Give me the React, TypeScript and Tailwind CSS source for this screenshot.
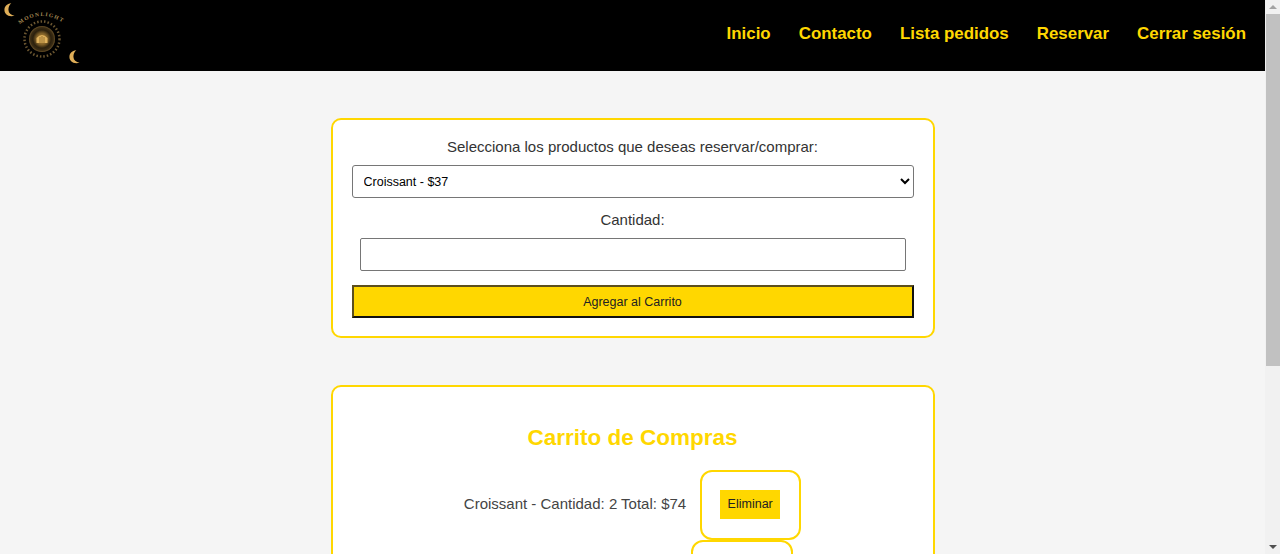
import React from "react";

const navLinks = ["Inicio", "Contacto", "Lista pedidos", "Reservar", "Cerrar sesión"];

function Crescent({ className }: { className: string }) {
    return (
        <svg className={className} viewBox="0 0 12 16" fill="#dfae58">
            <path d="M8 0.3C2.8 0.8 0.2 4.2 0.2 8C0.2 12.4 4.2 16.4 11.8 14.6C7.6 14 5 11.6 4.8 8C4.6 5 5.8 2.4 8 0.3Z" />
        </svg>
    );
}

function Logo() {
    return (
        <div className="relative w-[90px] h-[70px]">
            <Crescent className="absolute left-[4px] top-[2px] w-[11px] h-[14px]" />
            <Crescent className="absolute left-[69px] top-[49px] w-[11px] h-[14px]" />
            <svg className="absolute left-[16px] top-[10px] w-[52px] h-[48px]" viewBox="0 0 52 48">
                <defs>
                    <path id="arc-top" d="M3 14Q26 -4 50 14" />
                    <radialGradient id="seal">
                        <stop offset="0" stopColor="#c9963c" />
                        <stop offset="0.45" stopColor="#7a5c26" />
                        <stop offset="0.7" stopColor="#2b200d" />
                        <stop offset="0.88" stopColor="#3a2c14" />
                        <stop offset="1" stopColor="#6b5228" />
                    </radialGradient>
                </defs>
                <text fontFamily="'Liberation Serif', serif" fontSize="5.5" fontWeight="700" fill="#a88c55" letterSpacing="1.2">
                    <textPath href="#arc-top" startOffset="1">MOONLIGHT</textPath>
                </text>
                <circle cx="26" cy="28" r="17.5" fill="none" stroke="#6b5630" strokeWidth="2.5" strokeDasharray="1.5 2" />
                <circle cx="26" cy="28" r="13" fill="url(#seal)" />
                <path d="M20.5 32L20.5 27Q26 21 31.5 27L31.5 32Z" fill="#e0b25c" />
                <path d="M24 32L24 26M26 32L26 25M28 32L28 26" stroke="#7a5a20" strokeWidth="0.7" />
            </svg>
        </div>
    );
}

function CartRow({ text }: { text?: string }) {
    return (
        <div className="flex items-center justify-center gap-[14px]">
            {text ? <span className="text-[15px] text-[#444] mb-[2px]">{text}</span> : <span className="w-[204px]"></span>}
            <div className={text
                ? "border-2 border-[#ffd700] rounded-[12px] pl-[18px] pr-[19px] pt-[18px] pb-[20px] w-[101px] h-[70px] flex items-center justify-center"
                : "border-2 border-[#ffd700] rounded-[12px] w-[102px] h-[70px]"}>
                {text && <button className="bg-[#ffd700] text-[#222] text-[12.5px] w-[60px] h-[29px] shrink-0">Eliminar</button>}
            </div>
        </div>
    );
}

function ScrollBar() {
    return (
        <div className="w-[15px] h-full bg-[#f1f1f1] flex flex-col items-center">
            <div className="h-[14px] flex items-center justify-center">
                <div className="w-0 h-0 border-x-[4px] border-x-transparent border-b-[4px] border-b-[#a3a3a3]"></div>
            </div>
            <div className="w-[14px] ml-[1px] h-[352px] bg-[#c1c1c1]"></div>
            <div className="flex-1"></div>
            <div className="h-[14px] flex items-center justify-center">
                <div className="w-0 h-0 border-x-[4px] border-x-transparent border-t-[4px] border-t-[#505050]"></div>
            </div>
        </div>
    );
}

function App(): JSX.Element {
    return (
        <div className="flex w-screen h-screen overflow-hidden bg-[#f5f5f5] font-['Liberation_Sans',Arial,sans-serif]">
            <div className="flex-1 min-w-0 h-full overflow-hidden">
                <header className="h-[71px] bg-black flex items-center justify-between pr-[19px]">
                    <Logo />
                    <nav className="flex gap-[28px] mb-[3px]">
                        {navLinks.map((link) => (
                            <a key={link} className="text-[#ffd700] text-[16.9px] font-bold">{link}</a>
                        ))}
                    </nav>
                </header>

                <section className="w-[604px] mx-auto mt-[47px] h-[220px] bg-white border-2 border-[#ffd700] rounded-[10px] pt-[18px] text-center">
                    <label className="block text-[15px] leading-[18px] text-[#333]">Selecciona los productos que deseas reservar/comprar:</label>
                    <select className="block w-[562px] h-[33px] mx-auto mt-[9px] px-[7px] text-[12.5px] text-black bg-white border border-[#767676] rounded-[3px]">
                        <option>Croissant - $37</option>
                    </select>
                    <label className="block text-[15px] leading-[18px] text-[#333] mt-[13px]">Cantidad:</label>
                    <input type="text" className="block w-[546px] h-[33px] mx-auto mt-[9px] bg-white border border-[#767676] rounded-[2px]" />
                    <button className="block w-[562px] h-[33px] mx-auto mt-[14px] pt-[1px] bg-[#ffd700] text-[12.5px] text-[#222] border-2 border-t-[#5c4f1e] border-l-[#5c4f1e] border-r-[#111] border-b-[#111]">Agregar al Carrito</button>
                </section>

                <section className="w-[604px] mx-auto mt-[47px] bg-white border-2 border-[#ffd700] rounded-[10px] pt-[37px] pb-[20px] text-center">
                    <h2 className="text-[22.5px] leading-[27px] font-bold text-[#ffd700] mb-[19px]">Carrito de Compras</h2>
                    <CartRow text="Croissant - Cantidad: 2 Total: $74" />
                    <CartRow />
                </section>
            </div>
            <ScrollBar />
        </div>
    );
}

export default App;
